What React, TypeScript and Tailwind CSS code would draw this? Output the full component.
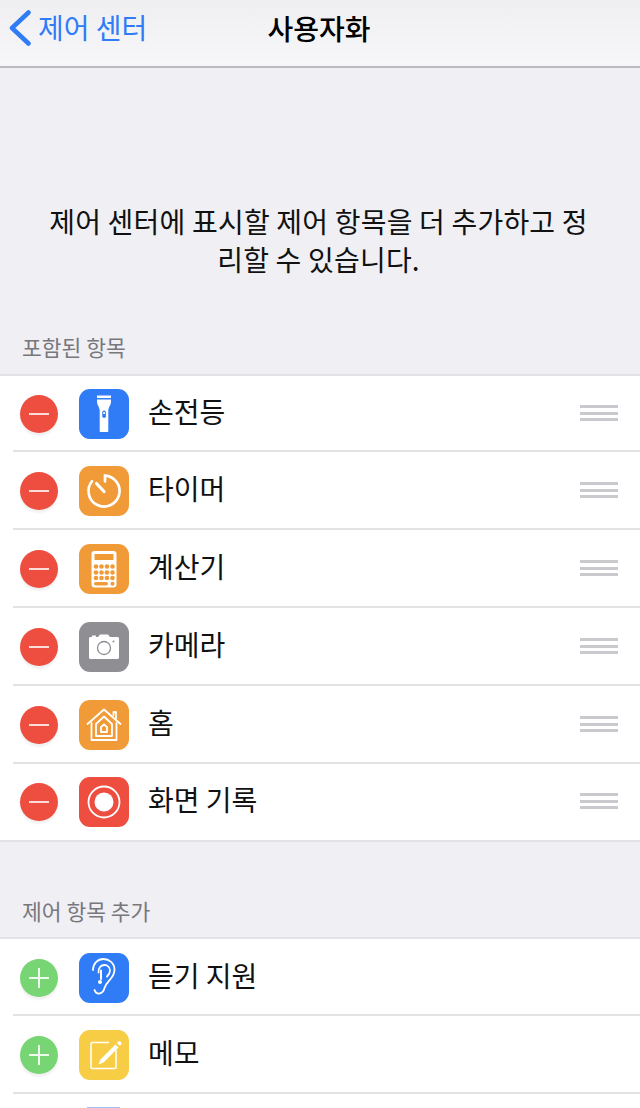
import { ReactNode } from "react"

const font = "font-['Noto_Sans_CJK_KR','Noto_Sans',sans-serif]"

function BackChevron() {
  return (
    <svg viewBox="0 0 24 36" className="w-[24px] h-[36px]" fill="none" stroke="#2f7cf6" strokeWidth="4.500" strokeLinecap="round" strokeLinejoin="round">
      <path d="M20.500 2.500L4 18l16.500 15.500" />
    </svg>
  )
}

function Flashlight() {
  return (
    <svg viewBox="0 0 50 50" className="w-full h-full" fill="none">
      <path d="M18 6.500h14v2.500H18z" fill="#fff" />
      <path d="M18 10.500h14v2.500c0 3-2.700 5.500-2.700 8.500v20.500c0 .6-.4 1-1 1h-6.600c-.6 0-1-.4-1-1V21.500c0-3-2.700-5.500-2.700-8.500z" fill="#fff" />
      <rect x="23.300" y="21.500" width="3.600" height="7.500" rx="1.800" fill="#2f7cf6" />
      <circle cx="25.100" cy="24" r="1.100" fill="#fff" />
    </svg>
  )
}

function Timer() {
  return (
    <svg viewBox="0 0 50 50" className="w-full h-full" fill="none" stroke="#fff" strokeLinecap="round">
      <path d="M26 15.500V9.600a15.500 15.500 0 1 1-12.900 5.600" strokeWidth="2.700" />
      <path d="M17.500 17.500l7.500 8" strokeWidth="3.200" />
    </svg>
  )
}

function Calculator() {
  const keys = [
    [17, 22.500], [22.500, 22.500], [28, 22.500], [33.500, 22.500],
    [17, 28.500], [22.500, 28.500], [28, 28.500], [33.500, 28.500],
    [17, 34], [22.500, 34], [28, 34], [33.500, 34],
  ]
  return (
    <svg viewBox="0 0 50 50" className="w-full h-full">
      <rect x="12.500" y="7" width="25" height="36.500" rx="3" fill="#fff" />
      <rect x="15.500" y="10" width="19" height="6" rx="0.500" fill="#f19a38" />
      {keys.map(([cx, cy]) => (
        <circle key={`${cx}-${cy}`} cx={cx} cy={cy} r="2.300" fill="#f19a38" />
      ))}
      <rect x="15" y="38" width="14" height="3.400" rx="1.700" fill="#f19a38" />
      <circle cx="33.500" cy="39.700" r="2" fill="#f19a38" />
    </svg>
  )
}

function Camera() {
  return (
    <svg viewBox="0 0 50 50" className="w-full h-full">
      <path d="M10 16.500c0-.8.600-1.500 1.500-1.500h1.500V13.500h4V15h2l2-2.500h8l2 2.500h7.500c.900 0 1.500.700 1.500 1.500v19c0 .800-.600 1.500-1.500 1.500h-27c-.900 0-1.500-.700-1.500-1.500z" fill="#fff" />
      <circle cx="25" cy="26" r="6.500" fill="none" stroke="#8e8e93" strokeWidth="1.300" />
      <circle cx="34.500" cy="19.500" r="1" fill="#8e8e93" />
    </svg>
  )
}

function Home() {
  return (
    <svg viewBox="0 0 50 50" className="w-full h-full" fill="none" stroke="#fff" strokeWidth="1.800" strokeLinejoin="round" strokeLinecap="round">
      <path d="M8.500 24L25 9.500 41.500 24M34.500 15v-3h2.500v6.500" />
      <path d="M12.500 23v17h25V23" />
      <path d="M17 24l8-7.500 8 7.500v12H17z" />
      <path d="M22 27l3-2.500 3 2.500v5h-6z" />
    </svg>
  )
}

function Record() {
  return (
    <svg viewBox="0 0 50 50" className="w-full h-full" fill="none">
      <circle cx="25" cy="25" r="15.500" stroke="#fff" strokeWidth="1.800" />
      <circle cx="25" cy="25" r="9.500" fill="#fff" />
    </svg>
  )
}

function Ear() {
  return (
    <svg viewBox="0 0 50 50" className="w-full h-full" fill="none" stroke="#fff" strokeWidth="1.800" strokeLinecap="round">
      <path d="M15.500 37c.8 2.500 2.800 3.800 5 3.500 3-.4 4.300-2.800 5-5.500 1-3.700 3.500-6 6-9 2.300-2.700 4-5.500 4-9.500C35.500 10 30 6 24.500 6 18.500 6 14 10.500 14 17" />
      <path d="M19.500 19.500c-.2-4.500 2.200-7.500 6-7.500 3.300 0 5.500 2.700 5.500 5.800 0 2.500-1.500 4.200-3 5.700" />
      <path d="M22 17.500v8.500" strokeWidth="2" />
      <circle cx="21" cy="29" r="2" fill="#fff" stroke="none" />
    </svg>
  )
}

function Notes() {
  return (
    <svg viewBox="0 0 50 50" className="w-full h-full" fill="none">
      <path d="M30 12.500H13.300c-.7 0-1.300.6-1.300 1.300v23.400c0 .7.600 1.300 1.300 1.300h22.400c.7 0 1.300-.6 1.300-1.300V20" stroke="#fff" strokeWidth="1.500" />
      <path d="M21.500 29.500l15-15 3 3-15 15-5 2z" fill="#fff" />
      <path d="M38 13l1.400-1.400c.6-.6 1.500-.6 2 0l.8.800c.6.600.6 1.400 0 2L40.800 15.800z" fill="#fff" />
    </svg>
  )
}

function RemoveButton() {
  return (
    <div className="w-[38px] h-[38px] rounded-full bg-[#ee4e3f] shadow-[0_3px_2px_rgba(0,0,0,0.06)] flex items-center justify-center">
      <div className="w-[20px] h-[2px] bg-[#fbdcd8]" />
    </div>
  )
}

function AddButton() {
  return (
    <div className="relative w-[38px] h-[38px] rounded-full bg-[#78d574] shadow-[0_3px_2px_rgba(0,0,0,0.06)] flex items-center justify-center">
      <div className="w-[20px] h-[2px] bg-[#f0fbef]" />
      <div className="absolute w-[2px] h-[20px] bg-[#f0fbef]" />
    </div>
  )
}

function Row({
  action,
  color,
  icon,
  label,
  height = "h-[78px]",
  reorder,
  last,
}: {
  action: ReactNode
  color: string
  icon: ReactNode
  label: string
  height?: string
  reorder?: boolean
  last?: boolean
}) {
  return (
    <div className={`relative ${height} flex items-center pl-5 pr-[22px]`}>
      {action}
      <div className={`ml-[21px] w-[50px] h-[50px] rounded-[11px] overflow-hidden shrink-0 ${color}`}>{icon}</div>
      <span className="ml-[19px] -mt-[6px] text-[28px] leading-none text-[#111]">{label}</span>
      {reorder && (
        <div className="ml-auto -mt-[2px] flex flex-col gap-[3.500px]">
          <div className="w-[38px] h-[3px] bg-[#c9c9ce]" />
          <div className="w-[38px] h-[3px] bg-[#c9c9ce]" />
          <div className="w-[38px] h-[3px] bg-[#c9c9ce]" />
        </div>
      )}
      {!last && <div className="absolute left-[13px] right-0 bottom-0 h-[2px] bg-[#e3e3e6]" />}
    </div>
  )
}

const included = [
  { label: "손전등", color: "bg-[#2f7cf6]", icon: <Flashlight />, height: "h-[76px]" },
  { label: "타이머", color: "bg-[#f19a38]", icon: <Timer /> },
  { label: "계산기", color: "bg-[#f19a38]", icon: <Calculator /> },
  { label: "카메라", color: "bg-[#8e8e93]", icon: <Camera /> },
  { label: "홈", color: "bg-[#f19a38]", icon: <Home /> },
  { label: "화면 기록", color: "bg-[#ee4e3f]", icon: <Record />, height: "h-[76px]" },
]

const more = [
  { label: "듣기 지원", color: "bg-[#2f7cf6]", icon: <Ear />, height: "h-[77px]" },
  { label: "메모", color: "bg-[#f8cd46]", icon: <Notes /> },
]

export default function App() {
  return (
    <div className={`w-[640px] h-[1108px] overflow-hidden bg-[#efeff4] ${font}`}>
      {/* Navigation bar */}
      <header className="relative h-[68px] bg-gradient-to-b from-[#efeff2] to-[#f7f7f9] border-b-2 border-[#bcbcc0] flex items-center justify-center">
        <div className="absolute left-[8px] top-[10px] flex items-center text-[#2f7cf6]">
          <BackChevron />
          <span className="ml-[6px] -mt-[3px] text-[28px] leading-[36px]">제어 센터</span>
        </div>
        <h1 className="-mt-[10px] pr-[2px] text-[28px] font-medium leading-none text-black">사용자화</h1>
      </header>

      <p className="pt-[134px] pl-[29px] pr-[32px] text-center text-[28px] leading-[38px] tracking-[0.2px] text-[#111]">
        제어 센터에 표시할 제어 항목을 더 추가하고 정<br />리할 수 있습니다.
      </p>

      <h2 className="mt-[53px] pl-[22px] text-[21.500px] leading-[32px] text-[#77777c]">포함된 항목</h2>
      <section className="mt-[11px] bg-white border-y-2 border-[#e3e3e6]">
        {included.map((item, i) => (
          <Row key={item.label} action={<RemoveButton />} reorder last={i === included.length - 1} {...item} />
        ))}
      </section>

      <h2 className="mt-[53px] pl-[22px] text-[21.500px] leading-[32px] text-[#77777c]">제어 항목 추가</h2>
      <section className="mt-[10px] bg-white border-t-2 border-[#e3e3e6]">
        {more.map((item) => (
          <Row key={item.label} action={<AddButton />} {...item} />
        ))}
        {/* Top edge of the next row's icon */}
        <div className="ml-[87px] mt-[13px] w-[33px] h-px bg-[#9cc4fb]" />
      </section>
    </div>
  )
}
